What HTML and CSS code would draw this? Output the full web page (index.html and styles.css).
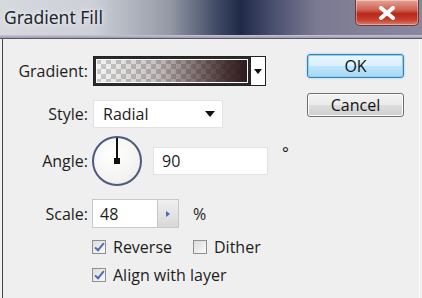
FILE: index.html
```html
<!DOCTYPE html>
<html lang="en">
<head>
  <meta charset="UTF-8">
  <title>Gradient Fill</title>
  <link rel="stylesheet" href="styles.css">
</head>
<body>
  <div class="window">
    <div class="titlebar">
      <span class="title">Gradient Fill</span>
      <div class="close-btn">
        <svg width="20" height="14" viewBox="0 0 20 14">
          <path d="M4 2 L16 12 M16 2 L4 12" stroke="#fff" stroke-width="4" stroke-linecap="round"/>
        </svg>
      </div>
    </div>
    <div class="frame-line"></div>
    <div class="dialog">
      <div class="form">
        <div class="row row-gradient">
          <label class="lbl">Gradient:</label>
          <div class="gradient-picker">
            <div class="swatch"></div>
            <div class="swatch-arrow"><span class="tri"></span></div>
          </div>
        </div>

        <div class="row row-style">
          <label class="lbl">Style:</label>
          <div class="select">
            <span>Radial</span>
            <span class="tri"></span>
          </div>
        </div>

        <div class="row row-angle">
          <label class="lbl">Angle:</label>
          <div class="dial">
            <div class="needle"></div>
            <div class="hub"></div>
          </div>
          <div class="field field-angle">90</div>
          <span class="unit deg">°</span>
        </div>

        <div class="row row-scale">
          <label class="lbl">Scale:</label>
          <div class="spin">
            <div class="spin-value">48</div>
            <div class="spin-btn"><span class="tri-right"></span></div>
          </div>
          <span class="unit">%</span>
        </div>

        <div class="checks">
          <div class="check-row">
            <label class="check"><span class="box checked"></span>Reverse</label>
            <label class="check check-dither"><span class="box"></span>Dither</label>
          </div>
          <div class="check-row">
            <label class="check"><span class="box checked"></span>Align with layer</label>
          </div>
        </div>
      </div>

      <div class="buttons">
        <button class="btn btn-ok">OK</button>
        <button class="btn">Cancel</button>
      </div>
    </div>
  </div>
</body>
</html>
```

FILE: styles.css
```css
html, body { margin: 0; padding: 0; }
body {
  width: 422px; height: 298px; overflow: hidden;
  font-family: "Open Sans", "Noto Sans", sans-serif;
  font-size: 16px; color: #1c1c1c;
  background: #f0f0f0;
}

.window { width: 422px; height: 298px; display: flex; flex-direction: column; }

/* title bar */
.titlebar {
  height: 35px; flex: none;
  display: flex; align-items: flex-start; justify-content: space-between;
  background: linear-gradient(to right, #d6d9de 0%, #ccd0d7 22%, #959aa6 40%, #3c4662 52%, #1f2a48 57%, #4a5070 65%, #7c7a92 75%, #8a879d 100%);
}
.title {
  margin: 5px 0 0 4px;
  font-family: "Noto Sans", sans-serif;
  font-size: 17.5px; color: #1e2430;
  text-shadow: 0 0 6px #eef0f4, 0 0 3px #eef0f4;
}
.close-btn {
  width: 62px; height: 25px; margin-right: 3px;
  border: 1px solid #6a3a3a; border-top: none;
  border-radius: 0 0 5px 5px;
  background: linear-gradient(#e3a596 0%, #d06050 40%, #b8281a 55%, #c84030 80%, #d88070 100%);
  display: flex; align-items: center; justify-content: center;
  box-shadow: inset 0 0 0 1px rgba(255,255,255,0.35);
}
.frame-line {
  height: 3px; flex: none;
  background: linear-gradient(#c8c6d6, #9c98ac);
  border-bottom: 1px solid #5a5a66;
}

/* dialog body */
.dialog {
  flex: 1;
  margin-left: 2px; margin-right: 2px;
  border-left: 1px solid #444;
  border-right: 1px solid #fafafa;
  background: #efefef;
  display: flex;
}
.form { width: 300px; padding-top: 17px; }

.row { display: flex; align-items: center; }
.lbl { width: 85px; text-align: right; margin-right: 5px; flex: none; }

.row-gradient { height: 30px; }
.row-style { height: 28px; margin-top: 14px; }
.row-angle { height: 50px; margin-top: 8px; }
.row-scale { height: 29px; margin-top: 13px; }

/* gradient picker */
.gradient-picker {
  display: flex; height: 30px; width: 173px;
  border: 1px solid #222; box-sizing: border-box;
  background: #fff;
}
.swatch {
  flex: 1;
  border: 2px solid #2a2a2a;
  box-shadow: inset 0 0 0 1px #fff;
  background:
    linear-gradient(to right, rgba(60,32,32,0) 0%, rgba(60,32,32,0.25) 40%, rgba(46,22,22,0.85) 85%, #2d1a1a 100%),
    repeating-conic-gradient(#f6f6f6 0 25%, #c9c9c9 0 50%) 0 0 / 10px 10px;
}
.swatch-arrow {
  width: 14px; display: flex; align-items: center; justify-content: center;
  border-left: 1px solid #222;
}
.tri {
  width: 0; height: 0;
  border-left: 4px solid transparent; border-right: 4px solid transparent;
  border-top: 5px solid #111;
}

/* select */
.select {
  width: 130px; height: 28px; box-sizing: border-box;
  background: #fff; border: 1px solid #e2e2e2;
  display: flex; align-items: center; justify-content: space-between;
  padding: 0 7px 0 9px;
}
.select .tri { border-left-width: 5px; border-right-width: 5px; border-top-width: 6px; }

/* angle dial */
.dial {
  position: relative;
  width: 50px; height: 50px; box-sizing: border-box;
  margin-left: -1px;
  border-radius: 50%;
  border: 2px solid #4d5a80;
  background: radial-gradient(circle at 40% 35%, #ffffff 0%, #f4f4f2 60%, #e4e4e4 100%);
}
.needle {
  position: absolute; left: 22px; top: 0;
  width: 2px; height: 23px; background: #111;
}
.hub {
  position: absolute; left: 20px; top: 20px;
  width: 6px; height: 6px; background: #111;
}
.field {
  background: #fff; border: 1px solid #e2e2e2; box-sizing: border-box;
  height: 28px; display: flex; align-items: center; padding-left: 8px;
}
.field-angle { width: 115px; margin-left: 11px; }
.unit { margin-left: 14px; }
.deg { align-self: flex-start; margin-top: 6px; font-size: 16px; }

/* scale spinner */
.spin {
  display: flex; height: 29px; box-sizing: border-box;
  border: 1px solid #c8c8c8; background: #fff;
  margin-left: -1px;
}
.spin-value { width: 64px; padding-left: 7px; box-sizing: border-box; display: flex; align-items: center; }
.spin-btn {
  width: 20px; display: flex; align-items: center; justify-content: center;
  border-left: 1px solid #c8c8c8;
  background: linear-gradient(#f0f0f0, #d8d8d8);
}
.tri-right {
  width: 0; height: 0;
  border-top: 3px solid transparent; border-bottom: 3px solid transparent;
  border-left: 4px solid #3f6fb0;
}

/* checkboxes */
.checks { margin-top: 11px; margin-left: 89px; }
.check-row { display: flex; height: 15px; align-items: center; margin-bottom: 13px; }
.check { display: flex; align-items: center; }
.check-dither { margin-left: 21px; }
.box {
  width: 14px; height: 14px; box-sizing: border-box; margin-right: 7px;
  border: 1px solid #8e8f8f;
  background: linear-gradient(135deg, #dcdcdc, #fafafa);
  position: relative;
}
.box.checked::after {
  content: ""; position: absolute; left: 4px; top: 0px;
  width: 3px; height: 8px;
  border: solid #4a6ab8; border-width: 0 2px 2px 0;
  transform: rotate(40deg);
}

/* buttons */
.buttons {
  display: flex; flex-direction: column;
  margin-left: 4px; padding-top: 15px;
}
.btn {
  width: 97px; height: 24px;
  font-family: "Open Sans", "Noto Sans", sans-serif; font-size: 16px; color: #111;
  border: 1px solid #707070; border-radius: 3px;
  background: linear-gradient(#f2f2f2 0%, #ebebeb 50%, #dddddd 51%, #cfcfcf 100%);
  box-shadow: inset 0 0 0 1px #fcfcfc;
  padding: 0; line-height: 20px;
  margin-bottom: 15px;
}
.btn-ok {
  border-color: #3c7fb1;
  background: linear-gradient(#eaf6fd 0%, #d9f0fc 50%, #bee6fd 51%, #a7d9f5 100%);
  box-shadow: inset 0 0 0 1px #8ecff3, 0 0 2px #6cc4f0;
}
```
